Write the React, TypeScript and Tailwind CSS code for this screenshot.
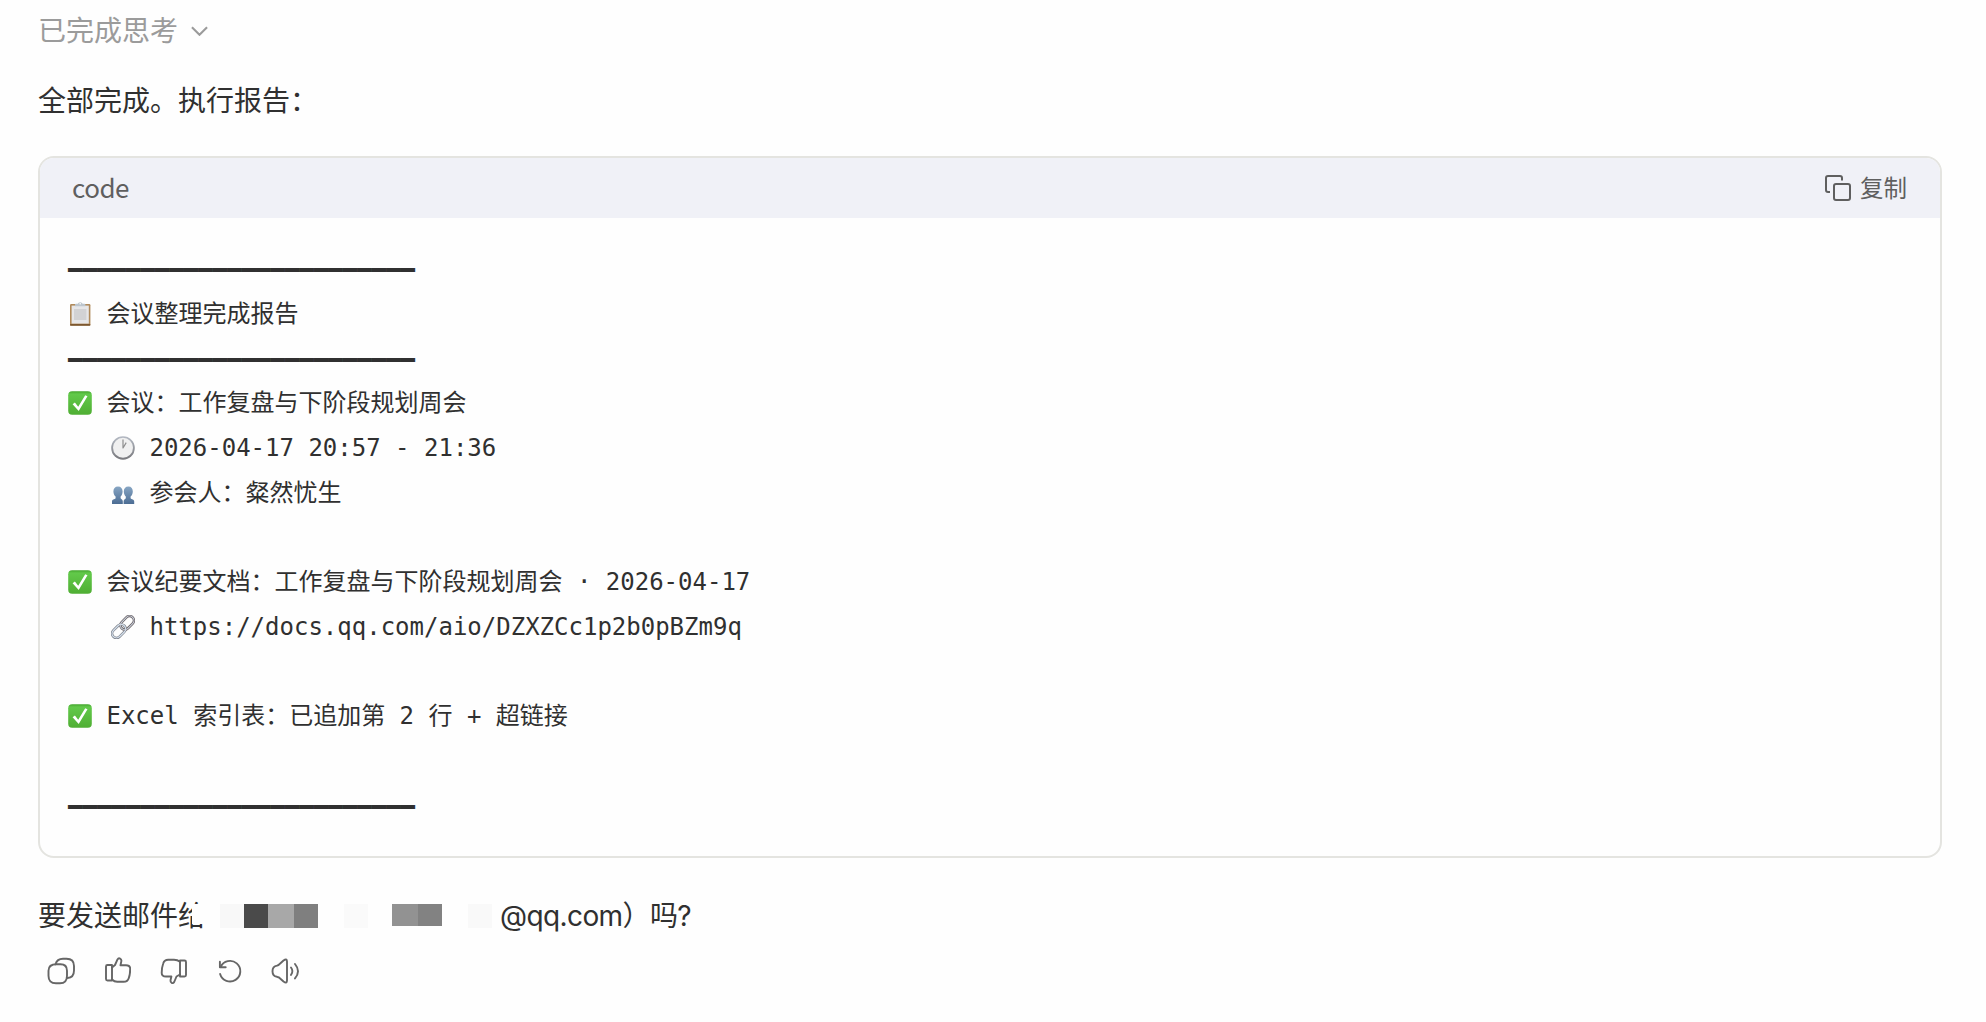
import type { ReactNode } from "react";

const RULE = "━".repeat(24);

function CheckEmoji() {
  return (
    <svg viewBox="0 0 24 24" className="h-6 w-6 shrink-0">
      <defs>
        <linearGradient id="check-bg" x1="0" y1="0" x2="0" y2="1">
          <stop offset="0" stopColor="#43a52c" />
          <stop offset="0.12" stopColor="#62c94a" />
          <stop offset="1" stopColor="#4fae33" />
        </linearGradient>
      </defs>
      <rect x="0.2" y="0.2" width="23.6" height="23.6" rx="4" fill="url(#check-bg)" />
      <path d="M4.6 13.2 6.9 11.4l3.3 4.4L17.2 4.2l2.3 1-8.8 14.8z" fill="#fff" />
    </svg>
  );
}

function ClipboardEmoji() {
  return (
    <svg viewBox="0 0 24 24" className="h-6 w-6 shrink-0">
      <rect x="2" y="2" width="20.4" height="21.6" rx="1.2" fill="#b08a5b" />
      <rect x="2" y="22" width="20.4" height="1.8" rx="0.8" fill="#7d5830" />
      <rect x="3.6" y="3.6" width="17.2" height="18" fill="#e6e6e8" />
      <rect x="6" y="7" width="12.4" height="11" fill="#d2d2d4" />
      <path d="M7 4.2V2.6q0-.8 1-.8h1.8q.4-1.6 2.4-1.6t2.4 1.6h1.8q1 0 1 .8v1.6z" fill="#bcc5cd" />
      <circle cx="12.2" cy="1.8" r="0.8" fill="#fff" />
    </svg>
  );
}

function ClockEmoji() {
  return (
    <svg viewBox="0 0 24 24" className="h-6 w-6 shrink-0">
      <defs>
        <linearGradient id="clock-rim" x1="0" y1="0" x2="0" y2="1">
          <stop offset="0" stopColor="#b4bac4" />
          <stop offset="1" stopColor="#77777b" />
        </linearGradient>
      </defs>
      <circle cx="12" cy="12" r="11.8" fill="url(#clock-rim)" />
      <circle cx="12" cy="11.8" r="10" fill="#f0f0f0" />
      <path d="M12 3.5V12l3.2-5.4" fill="none" stroke="#8e8e8e" strokeWidth="1.2" strokeLinejoin="round" />
    </svg>
  );
}

function PeopleEmoji() {
  return (
    <svg viewBox="0 0 24 24" className="h-6 w-6 shrink-0">
      <defs>
        <linearGradient id="people" x1="0" y1="0" x2="0" y2="1">
          <stop offset="0" stopColor="#88a6c4" />
          <stop offset="1" stopColor="#4b6c93" />
        </linearGradient>
      </defs>
      <g fill="url(#people)">
        <path d="M7 5.4c3 0 4.6 2 4.6 5 0 2.3-1 4-2 5.2v1.6c.8 1 2.2 1.3 2.2 3.2V23H1v-2.6c0-2 2.6-2 3.6-3.2v-1.6c-1.2-1.2-2.2-2.9-2.2-5.2 0-3 1.6-5 4.6-5z" />
        <path d="M17.4 5.4c-3 0-4.6 2-4.6 5 0 2.3 1 4 2 5.2v1.6c-.8 1-2.2 1.3-2.2 3.2V23h10.6v-2.6c0-2-2.6-2-3.6-3.2v-1.6c1.2-1.2 2.2-2.9 2.2-5.2 0-3-1.4-5-4.4-5z" />
      </g>
    </svg>
  );
}

function LinkEmoji() {
  return (
    <svg viewBox="0 0 24 24" className="h-6 w-6 shrink-0" fill="none">
      <g transform="rotate(-45 12 12)">
        <rect x="-1.6" y="7.6" width="15.4" height="8.8" rx="4.4" stroke="#73777f" strokeWidth="2.6" />
        <rect x="10.2" y="7.6" width="15.4" height="8.8" rx="4.4" stroke="#6a6265" strokeWidth="2.6" />
        <rect x="-1.6" y="7.6" width="15.4" height="8.8" rx="4.4" stroke="#d3deeb" strokeWidth="1.4" />
        <rect x="10.2" y="7.6" width="15.4" height="8.8" rx="4.4" stroke="#cbd3df" strokeWidth="1" />
      </g>
    </svg>
  );
}

function Line({ indent, children }: { indent?: boolean; children?: ReactNode }) {
  return (
    <div className={`flex h-[44.75px] items-center pb-[3px] whitespace-pre ${indent ? "pl-[43px]" : ""}`}>
      {children}
    </div>
  );
}

function Rule() {
  return <div className="flex h-[44.75px] items-center">{RULE}</div>;
}

// Pixelated part of the mail address, starts on top of the last character before it
const mosaic = [
  "h-5 w-[28px] bg-[#fefefe]",
  "w-[24px] bg-[#f8f8f8]",
  "w-[24px] bg-[#4a4a4a]",
  "w-[26px] bg-[#a8a8a8]",
  "w-[24px] bg-[#7f7f7f]",
  "w-[26px]",
  "w-[24px] bg-[#fafafa]",
  "w-[24px]",
  "h-[22px] w-[26px] bg-[#929292]",
  "h-[22px] w-[24px] bg-[#828282]",
  "w-[26px]",
  "w-[24px] bg-[#f9f9f9]",
];

const actions = [
  {
    name: "copy",
    paths: [
      "M9.5 7.3h4q6.5 0 6.5 6.5v5q0 7.5-7 7.5H9q-7.5 0-7.5-7.5v-5q0-6.5 8-6.5z",
      "M8.5 7.3Q10 1.7 16 1.7h3.5Q27 1.7 27 9v4.5q0 7-6.5 7.5",
    ],
  },
  {
    name: "like",
    paths: [
      "M3 9.5q0-1.5 1.5-1.5H9v15.5H4.5Q3 23.5 3 22z",
      "M9 10.5 12 8l2.5-5.6q1-1.6 2.6-.8 1.6.8 1.2 2.8l-.8 3.9H23q4.2 0 4.2 3.5 0 5.5-1.5 9.5-1 3.5-5 3.5h-6Q11.5 25 9 22.5",
    ],
  },
  {
    name: "dislike",
    paths: [
      "M21 3.5h4.5Q27 3.5 27 5v13q0 1.5-1.5 1.5H21z",
      "M21 17.5l-3.5 2-2.3 5.5q-1 1.6-2.5.9-1.5-.8-1.2-2.7l.9-3.7H7q-4.3 0-4.3-3.5 0-5.5 1.5-9.5Q5.2 2.7 9.2 2.7H15q3.5 0 6 2",
    ],
  },
  {
    name: "retry",
    paths: ["M4.9 4.8v5.4h5.8", "M5.6 10A10.3 10.3 0 1 1 5.1 17"],
  },
  {
    name: "speak",
    paths: [
      "M7.5 8 12.5 3.5Q16 1 16 4.5v19q0 3.5-3.5 1L8 20.5 6 19.8Q1.5 19 1.5 14.2T6 8.6z",
      "M20 10.5q2.8 3.7 0 7.4",
      "M24 7q6 7.2 0 14.4",
    ],
  },
];

export default function App() {
  return (
    <main className="h-[1022px] w-[1986px] overflow-hidden bg-[#fefefe] pl-[38px] font-[Inter,'Noto_Sans_CJK_SC',sans-serif] text-[28px] text-[#303030]">
      <div className="flex h-[62px] items-center text-[#9b9b9b]">
        <span>已完成思考</span>
        <svg viewBox="0 0 18 10" className="ml-[13px] h-2.5 w-[17px]" fill="none" stroke="currentColor" strokeWidth="2.2">
          <path d="M1 1l8 8 8-8" />
        </svg>
      </div>
      <p className="h-[94px] pt-[18px] leading-[42px]">全部完成。执行报告：</p>

      <section className="h-[702px] w-[1904px] overflow-hidden rounded-[16px] border-2 border-[#e4e4e0] bg-[#fefefe]">
        <header className="flex h-[60px] items-center justify-between bg-[#f0f1f7] pr-[33px] pl-8 text-[#5f5f5f]">
          <span className="pb-1 font-['Noto_Sans_CJK_SC',sans-serif] text-[26px] tracking-[-0.5px]">code</span>
          <button className="flex items-center gap-[9px] text-[23.5px]">
            <svg viewBox="0 0 26 26" className="h-[26px] w-[26px]" fill="none" stroke="currentColor" strokeWidth="2">
              <rect x="9" y="9" width="16" height="16" rx="2" />
              <path d="M17 5.5V3q0-2-2-2H3Q1 1 1 3v12q0 2 2 2h2" />
            </svg>
            <span className="pt-0.5">复制</span>
          </button>
        </header>
        <div className="pt-[30px] pl-7 font-['DejaVu_Sans_Mono','Noto_Sans_CJK_SC',monospace] text-[24px]">
          <Rule />
          <Line><ClipboardEmoji /> 会议整理完成报告</Line>
          <Rule />
          <Line><CheckEmoji /> 会议：工作复盘与下阶段规划周会</Line>
          <Line indent><ClockEmoji /> 2026-04-17 20:57 - 21:36</Line>
          <Line indent><PeopleEmoji /> 参会人：粲然忧生</Line>
          <Line />
          <Line><CheckEmoji /> 会议纪要文档：工作复盘与下阶段规划周会 · 2026-04-17</Line>
          <Line indent><LinkEmoji /> https://docs.qq.com/aio/DZXZCc1p2b0pBZm9q</Line>
          <Line />
          <Line><CheckEmoji /> Excel 索引表：已追加第 2 行 + 超链接</Line>
          <Line />
          <Rule />
        </div>
      </section>

      <div className="flex h-[84px] items-center pt-8">
        <span className="whitespace-nowrap">要发送邮件给</span>
        <span className="relative -ml-3.5 flex h-6">
          {mosaic.map((block, i) => (
            <span key={i} className={block} />
          ))}
        </span>
        <span className="ml-2 tracking-[-0.6px]">@qq.com）吗?</span>
      </div>
      <div className="flex h-[58px] items-center gap-7 pl-[9px] text-[#666]">
        {actions.map(({ name, paths }) => (
          <button key={name} aria-label={name}>
            <svg viewBox="0 0 28 28" className="h-7 w-7" fill="none" stroke="currentColor" strokeWidth="1.9" strokeLinecap="round" strokeLinejoin="round">
              {paths.map((d) => (
                <path key={d} d={d} />
              ))}
            </svg>
          </button>
        ))}
      </div>
    </main>
  );
}
